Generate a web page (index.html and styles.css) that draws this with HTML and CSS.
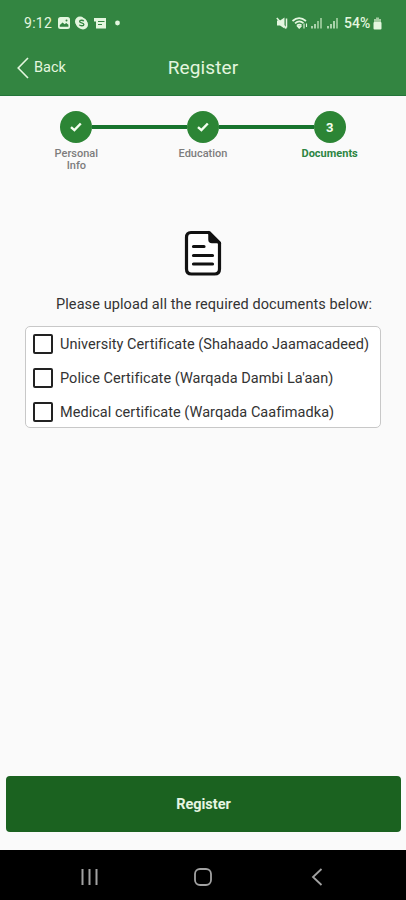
FILE: index.html
```
<!DOCTYPE html>
<html lang="en">
<head>
    <meta charset="UTF-8">
    <meta name="viewport" content="width=device-width, initial-scale=1.0">
    <title>Register</title>
    <link rel="stylesheet" href="styles.css">
</head>
<body>
    <header class="header">
        <div class="status-bar">
            <span class="time">9:12</span>
            <svg class="notifications" width="64" height="14" viewBox="0 0 64 14">
                <rect x="0" y="1" width="12" height="12" rx="2.5" fill="#e4f6df"/>
                <path d="M1.8 10.8V9l2.8-2.6 2 1.8 1.6-1.2 2.2 1.8v2z" fill="#338541"/>
                <circle cx="8.5" cy="4.4" r="1" fill="#338541"/>
                <circle cx="22" cy="5.5" r="5" fill="#e4f6df"/>
                <circle cx="25" cy="8.5" r="5" fill="#e4f6df"/>
                <circle cx="23.5" cy="7" r="5.6" fill="#e4f6df"/>
                <path d="M25.8 5.2c-.8-1.4-4.2-1.2-4.2.3 0 1.8 4.3 1 4.3 3 0 1.6-3.7 1.7-4.5.2" fill="none" stroke="#338541" stroke-width="1.3"/>
                <path d="M36 2h12v10.500H38V5.500h-2z" fill="#e4f6df"/>
                <path d="M40 5.500h6.500M40 8.500h4" stroke="#338541" stroke-width="1.2"/>
                <circle cx="59.500" cy="7" r="2.400" fill="#e4f6df"/>
            </svg>
            <svg class="signals" width="68" height="14" viewBox="0 0 68 14">
                <path d="M1 4.500h3L8.500 1.500v11L4 9.500H1z" fill="#e4f6df"/>
                <path d="M.8 2l9.500 10.500M10.500 2.500v9" fill="none" stroke="#e4f6df" stroke-width="1.500"/>
                <path d="M16.500 5Q23-.8 30 5M19 7.400q4.200-4 8.500-.2M21 9.700q2.200-2 4.500-.3" fill="none" stroke="#e4f6df" stroke-width="1.700"/>
                <path d="M23.300 12.300l-1.800-2h3.600zM28 7.500v5M30.500 7.500v3.500" fill="#e4f6df" stroke="#e4f6df" stroke-width="1.100"/>
                <path d="M36 10v2.500M39 8v4.500" stroke="#b9dcb8" stroke-width="1.800"/>
                <path d="M42 5v7.500M45 2v10.500" stroke="#9aca9a" stroke-width="1.800"/>
                <path d="M52 10v2.500M55 8v4.500M58 5v7.500" stroke="#b9dcb8" stroke-width="1.800"/>
                <path d="M61 2v10.500" stroke="#9aca9a" stroke-width="1.800"/>
            </svg>
            <span class="percent">54%</span>
            <svg class="battery" width="9" height="13" viewBox="0 0 9 13">
                <path d="M3 .5h3V2h2v4H1V2h2z" fill="#a5cda3"/>
                <rect x=".5" y="5" width="8" height="7.500" rx="1" fill="#e4f6df"/>
            </svg>
        </div>
        <div class="nav">
            <a class="back">
                <svg width="12" height="22" viewBox="0 0 12 22">
                    <path d="M11 1L1.200 11 11 21" fill="none" stroke="#e4f6df" stroke-width="1.600"/>
                </svg>
                <span>Back</span>
            </a>
            <h1>Register</h1>
        </div>
    </header>

    <main class="content">
        <div class="stepper">
            <div class="step">
                <div class="circle">
                    <svg width="12" height="10" viewBox="0 0 12 10"><path d="M1 5.200l3.400 3L10.800 1.500" fill="none" stroke="#f4fff0" stroke-width="2.400"/></svg>
                </div>
                <p>Personal<br>Info</p>
            </div>
            <div class="step">
                <div class="circle">
                    <svg width="12" height="10" viewBox="0 0 12 10"><path d="M1 5.200l3.400 3L10.800 1.500" fill="none" stroke="#f4fff0" stroke-width="2.400"/></svg>
                </div>
                <p>Education</p>
            </div>
            <div class="step active">
                <div class="circle">3</div>
                <p>Documents</p>
            </div>
        </div>

        <svg class="doc-icon" width="38" height="46" viewBox="0 0 38 46">
            <path d="M7 2.500h18L35.500 13v26q0 5-5 5H7.500q-5 0-5-5V7.500q0-5 4.500-5z" fill="#fff" stroke="#111" stroke-width="3.200" stroke-linejoin="round"/>
            <path d="M25 2.500v7q0 3 3 3h7.500z" fill="#111" stroke="#111" stroke-width="1.500"/>
            <path d="M9.500 16.500H20M9.500 25.500h19M9.500 34h19" stroke="#111" stroke-width="3.200" stroke-linecap="round"/>
        </svg>

        <p class="message">Please upload all the required documents below:</p>

        <div class="documents">
            <div class="document"><span class="checkbox"></span><span>University Certificate (Shahaado Jaamacadeed)</span></div>
            <div class="document"><span class="checkbox"></span><span>Police Certificate (Warqada Dambi La'aan)</span></div>
            <div class="document"><span class="checkbox"></span><span>Medical certificate (Warqada Caafimadka)</span></div>
        </div>

        <button class="register">Register</button>
    </main>

    <footer class="system-nav">
        <svg width="18" height="18" viewBox="0 0 18 18">
            <path d="M2.500 1v16M9.500 1v16M16.500 1v16" stroke="#a2a2a2" stroke-width="2"/>
        </svg>
        <svg width="18" height="18" viewBox="0 0 18 18">
            <rect x="1" y="1" width="16" height="16" rx="5" fill="none" stroke="#a2a2a2" stroke-width="1.800"/>
        </svg>
        <svg width="18" height="18" viewBox="0 0 18 18">
            <path d="M13.500 1L5 9l8.500 8" fill="none" stroke="#a2a2a2" stroke-width="1.800"/>
        </svg>
    </footer>
</body>
</html>
```
FILE: styles.css
```
body {
    font-family: Roboto, sans-serif;
    background-color: #fafafa;
    margin: 0;
    height: 900px;
    display: flex;
    flex-direction: column;
    color: #333;
}

h1, p {
    margin: 0;
    font-weight: normal;
}

svg {
    display: block;
    flex-shrink: 0;
}

.header {
    height: 96px;
    box-sizing: border-box;
    background-color: #338541;
    border-bottom: 1px solid #24753a;
    color: #e4f6df;
}

.status-bar {
    display: flex;
    align-items: center;
    height: 46px;
    padding: 0 24px 0 24px;
    font-size: 14px;
}

.time {
    width: 34px;
    letter-spacing: 0.3px;
}

.signals {
    margin-left: auto;
}

.percent {
    width: 29px;
    font-weight: 500;
}

.battery {
    margin-top: 1px;
}

.nav {
    display: grid;
    grid-template-columns: 1fr auto 1fr;
    align-items: center;
    height: 43px;
}

.back {
    display: flex;
    align-items: center;
    gap: 5px;
    padding-left: 17px;
    font-size: 14.5px;
}

h1 {
    font-size: 19px;
    letter-spacing: 0.1px;
}

.content {
    flex: 1;
    display: flex;
    flex-direction: column;
}

.stepper {
    display: grid;
    grid-template-columns: repeat(3, 1fr);
    height: 119px;
    box-sizing: border-box;
    padding: 15px 13px 0;
}

.step {
    display: grid;
    grid-template-columns: 1fr 32px 1fr;
    grid-template-rows: 32px auto;
    align-items: center;
    align-content: start;
}

.step:not(:first-child)::before,
.step:not(:last-child)::after {
    content: "";
    grid-row: 1;
    height: 4px;
    background-color: #17742d;
}

.step::before {
    grid-column: 1;
}

.step::after {
    grid-column: 3;
}

.circle {
    grid-column: 2;
    grid-row: 1;
    display: flex;
    align-items: center;
    justify-content: center;
    width: 32px;
    height: 32px;
    border-radius: 50%;
    background-color: #2c8535;
    color: #f4fff0;
    font-size: 13px;
    font-weight: bold;
}

.step p {
    grid-column: 1 / 4;
    grid-row: 2;
    padding-top: 5px;
    font-size: 11px;
    line-height: 12px;
    font-weight: 500;
    color: #7d7d7d;
    text-align: center;
}

.step.active p {
    font-weight: bold;
    color: #2c8542;
}

.doc-icon {
    margin: 15px 0 0 184px;
}

.message {
    margin: 19px 0 0 56px;
    font-size: 14.5px;
    line-height: 20px;
    letter-spacing: 0.09px;
    white-space: nowrap;
}

.documents {
    display: flex;
    flex-direction: column;
    box-sizing: border-box;
    width: 356px;
    height: 102px;
    margin: 11px 0 0 25px;
    border: 1px solid #c8c8c8;
    border-radius: 5px;
    background-color: #fff;
}

.document {
    display: flex;
    flex-shrink: 0;
    align-items: center;
    gap: 7px;
    height: 34px;
    padding-left: 7px;
    font-size: 14.5px;
    letter-spacing: 0.04px;
    white-space: nowrap;
}

.checkbox {
    box-sizing: border-box;
    width: 20px;
    height: 20px;
    border: 2px solid #222;
    border-radius: 2px;
}

.register {
    width: 395px;
    height: 56px;
    margin: auto 0 18px 6px;
    border: none;
    border-radius: 4px;
    background-color: #1b6220;
    color: #e6f5e2;
    font-family: inherit;
    font-size: 14.5px;
    font-weight: bold;
}

.system-nav {
    display: flex;
    justify-content: center;
    align-items: center;
    gap: 96px;
    height: 50px;
    padding-top: 3px;
    box-sizing: border-box;
    background-color: #000;
}
```
